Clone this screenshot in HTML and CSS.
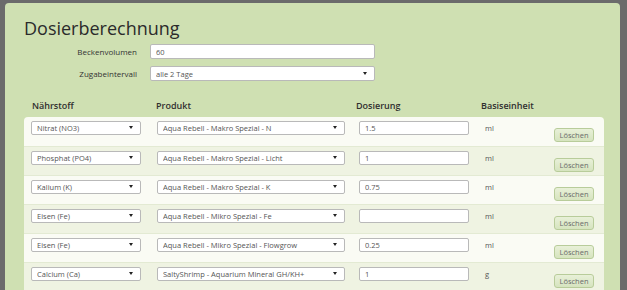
FILE: index.html
```html
<!DOCTYPE html>
<html lang="de">
<head>
    <meta charset="UTF-8">
    <title>Dosierberechnung</title>
    <link rel="stylesheet" href="styles.css">
</head>
<body>
    <div class="panel">
        <h1 class="title">Dosierberechnung</h1>

        <div class="settings">
            <label class="settings-label" for="volume">Beckenvolumen</label>
            <input class="field wide" id="volume" type="text" value="60">

            <label class="settings-label" for="interval">Zugabeintervall</label>
            <div class="select-wrap wide">
                <select class="field select" id="interval">
                    <option>alle 2 Tage</option>
                </select>
            </div>
        </div>

        <div class="dose-head">
            <div>Nährstoff</div>
            <div>Produkt</div>
            <div>Dosierung</div>
            <div>Basiseinheit</div>
        </div>

        <div class="dose-table">
            <div class="dose-row">
                <div class="select-wrap"><select class="field select"><option>Nitrat (NO3)</option></select></div>
                <div class="select-wrap product"><select class="field select"><option>Aqua Rebell - Makro Spezial - N</option></select></div>
                <input class="field" type="text" value="1.5">
                <div class="unit">ml</div>
                <button class="btn-delete">Löschen</button>
            </div>
            <div class="dose-row">
                <div class="select-wrap"><select class="field select"><option>Phosphat (PO4)</option></select></div>
                <div class="select-wrap product"><select class="field select"><option>Aqua Rebell - Makro Spezial - Licht</option></select></div>
                <input class="field" type="text" value="1">
                <div class="unit">ml</div>
                <button class="btn-delete">Löschen</button>
            </div>
            <div class="dose-row">
                <div class="select-wrap"><select class="field select"><option>Kalium (K)</option></select></div>
                <div class="select-wrap product"><select class="field select"><option>Aqua Rebell - Makro Spezial - K</option></select></div>
                <input class="field" type="text" value="0.75">
                <div class="unit">ml</div>
                <button class="btn-delete">Löschen</button>
            </div>
            <div class="dose-row">
                <div class="select-wrap"><select class="field select"><option>Eisen (Fe)</option></select></div>
                <div class="select-wrap product"><select class="field select"><option>Aqua Rebell - Mikro Spezial - Fe</option></select></div>
                <input class="field" type="text" value="">
                <div class="unit">ml</div>
                <button class="btn-delete">Löschen</button>
            </div>
            <div class="dose-row">
                <div class="select-wrap"><select class="field select"><option>Eisen (Fe)</option></select></div>
                <div class="select-wrap product"><select class="field select"><option>Aqua Rebell - Mikro Spezial - Flowgrow</option></select></div>
                <input class="field" type="text" value="0.25">
                <div class="unit">ml</div>
                <button class="btn-delete">Löschen</button>
            </div>
            <div class="dose-row">
                <div class="select-wrap"><select class="field select"><option>Calcium (Ca)</option></select></div>
                <div class="select-wrap product"><select class="field select"><option>SaltyShrimp - Aquarium Mineral GH/KH+</option></select></div>
                <input class="field" type="text" value="1">
                <div class="unit">g</div>
                <button class="btn-delete">Löschen</button>
            </div>
        </div>
    </div>
</body>
</html>
```

FILE: styles.css
```css
body {
    margin: 0;
    background-color: #6b6b6b;
    font-family: "Open Sans", sans-serif;
    color: #333;
    padding: 3px 7px 0 5px;
    height: 290px;
    box-sizing: border-box;
    overflow: hidden;
}

.panel {
    background-color: #cfe0b2;
    border-radius: 4px 4px 0 0;
    padding: 12px 16px 0 19px;
    height: 100%;
    box-sizing: border-box;
}

.title {
    margin: 0;
    font-weight: normal;
    font-size: 18px;
    line-height: 26px;
    color: #2b2b2b;
}

.settings {
    display: grid;
    grid-template-columns: 113px 225px;
    column-gap: 13px;
    row-gap: 7px;
    align-items: center;
    margin-top: 3px;
}

.settings-label {
    text-align: right;
    font-size: 8px;
    color: #333;
}

.field {
    display: block;
    box-sizing: border-box;
    height: 14px;
    width: 110px;
    border: 1px solid #b9b9b9;
    border-radius: 2px;
    background: #fff;
    font-family: "Open Sans", sans-serif;
    font-size: 7.5px;
    color: #555;
    padding: 0 5px;
    margin: 0;
    outline: none;
}

.settings .field {
    height: 15px;
}

.select-wrap {
    position: relative;
    width: 110px;
}

.settings .wide {
    width: 225px;
}

.select-wrap.product {
    width: 188px;
}

.select-wrap .select {
    width: 100%;
    appearance: none;
    -webkit-appearance: none;
    padding-right: 14px;
}

.select-wrap::after {
    content: "";
    position: absolute;
    right: 8px;
    top: 5px;
    border-left: 2px solid transparent;
    border-right: 2px solid transparent;
    border-top: 3px solid #222;
    pointer-events: none;
}

.settings .select-wrap::after {
    top: 6px;
}

.dose-head {
    display: grid;
    grid-template-columns: 124px 200px 125px 1fr;
    padding-left: 8px;
    margin-top: 18px;
    height: 18px;
    font-size: 9px;
    font-weight: 600;
    color: #2f2f2f;
}

.dose-table {
    border-radius: 4px 4px 0 0;
    overflow: hidden;
}

.dose-row {
    display: grid;
    grid-template-columns: 126px 202px 126px 69px 40px;
    align-items: start;
    height: 29px;
    box-sizing: border-box;
    padding: 4px 0 0 7px;
    background-color: #fafbf4;
    border-top: 1px solid #e3ead3;
}

.dose-row:first-child {
    border-top: none;
}

.dose-row:nth-child(even) {
    background-color: #eff3e2;
}

.unit {
    font-size: 7.5px;
    color: #555;
    padding-top: 2px;
}

.btn-delete {
    margin-top: 7px;
    height: 14px;
    width: 40px;
    padding: 0;
    border: 1px solid #b8cc9a;
    border-radius: 3px;
    background: linear-gradient(#e8f0d8, #d6e4bf);
    font-family: "Open Sans", sans-serif;
    font-size: 7.5px;
    color: #6a6a6a;
    cursor: pointer;
}
```
